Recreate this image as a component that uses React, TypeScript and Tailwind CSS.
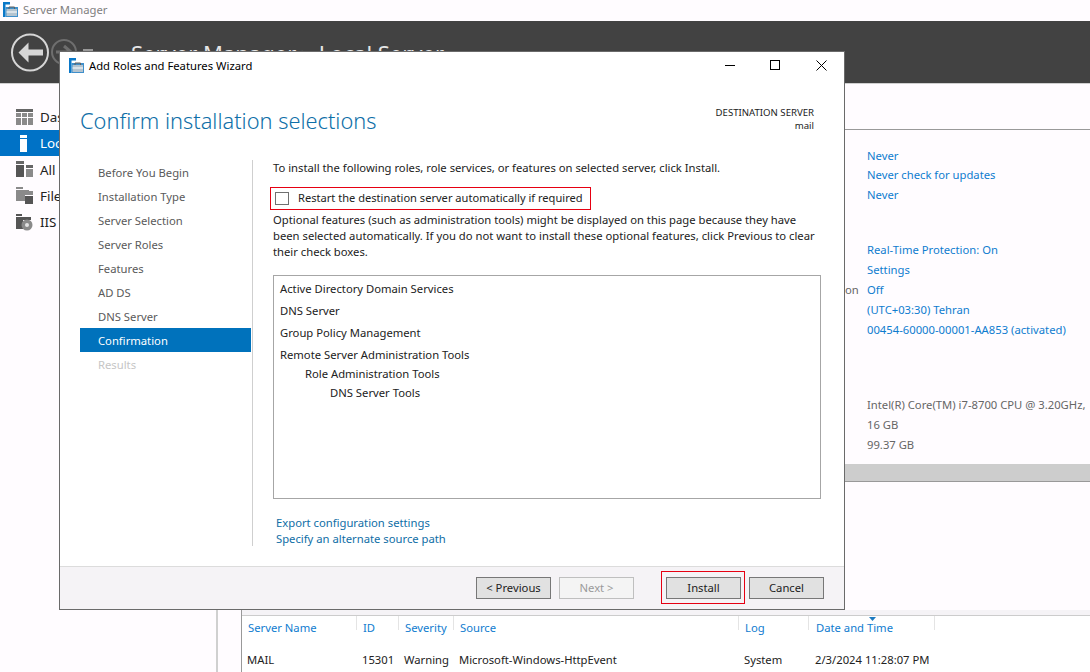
import type { ReactNode } from "react";

function Logo({ className }: { className: string }) {
  return (
    <svg viewBox="0 0 15 15" className={className}>
      <path d="M0 0H7V2.5H2.5V15H0Z" fill="#0a78c8" />
      <path d="M2.5 5H15V15H2.5Z" fill="#3f8fcb" />
      <path d="M3.5 7H14V14H3.5Z" fill="#b4c4d0" />
      <path d="M6 7V5H11.5V7" fill="none" stroke="#5f5f5f" strokeWidth="1" />
      <path d="M3.5 9.5H14V10.5H3.5Z" fill="#fff" />
    </svg>
  );
}

function T({ x, y, c = "", children }: { x: number; y: number; c?: string; children: ReactNode }) {
  return (
    <div className={`absolute whitespace-nowrap leading-4 ${c}`} style={{ left: x, top: y - 8 }}>
      {children}
    </div>
  );
}

function WizButton({ children, disabled, className = "" }: { children: ReactNode; disabled?: boolean; className?: string }) {
  return (
    <div
      className={`flex h-[22px] w-[75px] items-center justify-center border ${
        disabled ? "border-[#bfbfbf] bg-[#f4f4f4] text-[#9a9a9a]" : "border-[#777] bg-[#e1e1e1] text-[#222]"
      } ${className}`}
    >
      {children}
    </div>
  );
}

const link = "text-[#0f7ccf]";
const grey = "text-[#666]";

export default function App() {
  const nav = ["Before You Begin", "Installation Type", "Server Selection", "Server Roles", "Features", "AD DS", "DNS Server"];
  return (
    <div className="relative h-[672px] w-[1090px] overflow-hidden bg-[#fffcff] text-[11.25px] text-[#222] [font-family:'Open_Sans',sans-serif]">
      {/* title bar */}
      <Logo className="absolute left-[3px] top-[2px] h-[15px] w-[15px]" />
      <T x={23} y={10} c="text-[#7f7f7f]">Server Manager</T>

      {/* dark header */}
      <div className="absolute left-0 top-[21px] h-[63px] w-full border-b border-[#cfcfcf] bg-[#424242]" />
      <svg className="absolute left-[10px] top-[32px] h-[42px] w-[70px]" viewBox="0 0 70 42">
        <circle cx="20" cy="20.5" r="18" fill="none" stroke="#d6d6d6" strokeWidth="2" />
        <path d="M8.5 20.5L18.5 10.5V17.5H33V23.5H18.5V30.5Z" fill="#d6d6d6" />
        <circle cx="54" cy="20" r="12" fill="none" stroke="#6e6e6e" strokeWidth="2" />
        <path d="M46 20H60M54 14L61 20L54 26" fill="none" stroke="#6e6e6e" strokeWidth="3" />
      </svg>
      <div className="absolute left-[83px] top-[49px] h-[2px] w-[10px] bg-[#9a9a9a]" />
      <div className="absolute left-[131px] top-[39px] h-[12px] w-[330px] overflow-hidden whitespace-nowrap text-[22px] leading-7 text-[#e6e6e6]">
        Server Manager ▸ Local Server
      </div>

      {/* left nav */}
      <svg className="absolute left-[16px] top-[109px] h-[16px] w-[17px]" viewBox="0 0 17 16">
        <path d="M0 0H17V3H0Z" fill="#666" />
        <path d="M0 4H5V8H0ZM6 4H11V8H6ZM12 4H17V8H12ZM0 9H5V16H0ZM6 9H11V16H6ZM12 9H17V16H12Z" fill="#8a8a8a" />
      </svg>
      <T x={40} y={117} c="text-[13.4px]">Das</T>
      <div className="absolute left-0 top-[130px] h-[26px] w-[60px] bg-[#0072c6]" />
      <svg className="absolute left-[20px] top-[135px] h-[17px] w-[7px]" viewBox="0 0 7 17">
        <path d="M0 0H7V3H0ZM0 4H7V17H0Z" fill="#fff" />
      </svg>
      <T x={40} y={143} c="text-[13.4px] text-white">Loc</T>
      <svg className="absolute left-[16px] top-[161px] h-[16px] w-[17px]" viewBox="0 0 17 16">
        <path d="M0 0H8V3H0Z" fill="#666" />
        <path d="M0 4H8V16H0Z" fill="#555" />
        <path d="M10 4H17V7H10Z" fill="#666" />
        <path d="M10 8H17V16H10Z" fill="#8a8a8a" />
      </svg>
      <T x={40} y={170} c="text-[13.4px]">All</T>
      <svg className="absolute left-[16px] top-[187px] h-[17px] w-[17px]" viewBox="0 0 17 17">
        <path d="M0 0H7V2H0Z" fill="#8a8a8a" />
        <path d="M0 3H13V4H17V8H9V14H0Z" fill="#8a8a8a" />
        <path d="M9 9H17V17H9Z" fill="#555" />
      </svg>
      <T x={40} y={196} c="text-[13.4px]">File</T>
      <svg className="absolute left-[16px] top-[214px] h-[17px] w-[17px]" viewBox="0 0 17 17">
        <path d="M0 0H6V2H0Z" fill="#555" />
        <path d="M0 3H15V6H7V15H0Z" fill="#555" />
        <circle cx="11" cy="11" r="5.5" fill="#8a8a8a" />
        <circle cx="11" cy="11" r="2" fill="#e2e2e2" />
      </svg>
      <T x={40} y={222} c="text-[13.4px]">IIS</T>

      {/* right panel behind window */}
      <div className="absolute left-[844px] top-[129px] h-px w-[246px] bg-[#999]" />
      <T x={867} y={156} c={link}>Never</T>
      <T x={867} y={175} c={link}>Never check for updates</T>
      <T x={867} y={195} c={link}>Never</T>
      <T x={867} y={250} c={link}>Real-Time Protection: On</T>
      <T x={867} y={270} c={link}>Settings</T>
      <T x={845} y={290} c={grey}>on</T>
      <T x={867} y={290} c={link}>Off</T>
      <T x={867} y={310} c={link}>(UTC+03:30) Tehran</T>
      <T x={867} y={330} c={link}>00454-60000-00001-AA853 (activated)</T>
      <T x={867} y={405} c={grey}>Intel(R) Core(TM) i7-8700 CPU @ 3.20GHz,</T>
      <T x={867} y={425} c={grey}>16 GB</T>
      <T x={867} y={445} c={grey}>99.37 GB</T>
      <div className="absolute left-[844px] top-[464px] h-[18px] w-[246px] border-b border-[#999] bg-[#cdcdcd]" />

      {/* events table behind window */}
      <div className="absolute left-[216px] top-[610px] h-[62px] w-[2px] bg-[#d0d0d0]" />
      <div className="absolute left-[241px] top-[610px] h-[62px] w-px bg-[#999]" />
      <div className="absolute left-[242px] top-[610px] right-0 h-[6px] border-b border-[#ccc] bg-[#f5f3f6]" />
      <div className="absolute left-[242px] top-[616px] right-0 h-[56px] bg-white" />
      <div className="absolute left-[356px] top-[616px] h-[14px] w-px bg-[#e4e4e4]" />
      <div className="absolute left-[398px] top-[616px] h-[14px] w-px bg-[#e4e4e4]" />
      <div className="absolute left-[453px] top-[616px] h-[14px] w-px bg-[#e4e4e4]" />
      <div className="absolute left-[738px] top-[616px] h-[14px] w-px bg-[#e4e4e4]" />
      <div className="absolute left-[808px] top-[616px] h-[14px] w-px bg-[#e4e4e4]" />
      <div className="absolute left-[934px] top-[616px] h-[14px] w-px bg-[#e4e4e4]" />
      <svg className="absolute left-[869px] top-[617px] h-[4px] w-[7px]" viewBox="0 0 7 4">
        <path d="M0 0H7L3.5 4Z" fill="#1c7ac0" />
      </svg>
      <T x={248} y={628} c={link}>Server Name</T>
      <T x={363} y={628} c={link}>ID</T>
      <T x={405} y={628} c={link}>Severity</T>
      <T x={460} y={628} c={link}>Source</T>
      <T x={745} y={628} c={link}>Log</T>
      <T x={816} y={628} c={link}>Date and Time</T>
      <T x={247} y={660}>MAIL</T>
      <T x={362} y={660}>15301</T>
      <T x={404} y={660}>Warning</T>
      <T x={459} y={660}>Microsoft-Windows-HttpEvent</T>
      <T x={744} y={660}>System</T>
      <T x={815} y={660}>2/3/2024 11:28:07 PM</T>

      {/* wizard window */}
      <div className="absolute left-[59px] top-[51px] h-[559px] w-[786px] border border-[#6a6a6a] bg-white">
        <Logo className="absolute left-[9px] top-[6px] h-[15px] w-[15px]" />
        <T x={29} y={14} c="text-black">Add Roles and Features Wizard</T>
        <div className="absolute left-[665px] top-[13px] h-px w-[10px] bg-black" />
        <div className="absolute left-[710px] top-[8px] h-[10px] w-[10px] border border-black" />
        <svg className="absolute left-[756px] top-[8px] h-[11px] w-[11px]" viewBox="0 0 11 11">
          <path d="M0.5 0.5L10.5 10.5M10.5 0.5L0.5 10.5" stroke="#000" strokeWidth="1" />
        </svg>
        <div className="absolute left-[20px] top-[53px] whitespace-nowrap text-[21.8px] font-light leading-8 text-[#0f6fa8]">
          Confirm installation selections
        </div>
        <div className="absolute right-[30px] top-[54px] text-right text-[9.6px] leading-[13px]">
          DESTINATION SERVER
          <br />
          mail
        </div>

        {/* steps */}
        <div className="absolute left-[20px] top-[108px] flex w-[171px] flex-col text-[#5a5a5a]">
          {nav.map((n) => (
            <div key={n} className="flex h-6 items-center pl-[18px] pt-[2px]">{n}</div>
          ))}
          <div className="flex h-6 items-center bg-[#0072bc] pl-[18px] pt-[2px] text-white">Confirmation</div>
          <div className="flex h-6 items-center pl-[18px] pt-[2px] text-[#c6c6c6]">Results</div>
        </div>
        <div className="absolute left-[192px] top-[108px] h-[386px] w-px bg-[#cfcfcf]" />

        {/* content */}
        <T x={213} y={116}>To install the following roles, role services, or features on selected server, click Install.</T>
        <div className="absolute left-[210px] top-[135px] flex h-[23px] w-[321px] items-center border border-[#e60012] pl-[4px]">
          <div className="h-[13px] w-[14px] border border-[#707070] bg-white" />
          <div className="ml-[9px] whitespace-nowrap text-[11.1px]">Restart the destination server automatically if required</div>
        </div>
        <div className="absolute left-[213px] top-[160px] whitespace-nowrap leading-4">
          Optional features (such as administration tools) might be displayed on this page because they have
          <br />
          been selected automatically. If you do not want to install these optional features, click Previous to clear
          <br />
          their check boxes.
        </div>
        <div className="absolute left-[213px] top-[223px] h-[224px] w-[548px] border border-[#a6a6a6]">
          <T x={6} y={13}>Active Directory Domain Services</T>
          <T x={6} y={35}>DNS Server</T>
          <T x={6} y={57}>Group Policy Management</T>
          <T x={6} y={79}>Remote Server Administration Tools</T>
          <T x={31} y={98}>Role Administration Tools</T>
          <T x={56} y={117}>DNS Server Tools</T>
        </div>
        <T x={216} y={471} c="text-[#0f6ea6]">Export configuration settings</T>
        <T x={216} y={487} c="text-[#0f6ea6]">Specify an alternate source path</T>

        {/* footer */}
        <div className="absolute bottom-0 left-0 flex h-[43px] w-full items-start border-t border-[#dcdcdc] bg-[#f5f3f6] pl-[416px] pt-[10px]">
          <WizButton>&lt; Previous</WizButton>
          <WizButton disabled className="ml-2">Next &gt;</WizButton>
          <WizButton className="ml-8">Install</WizButton>
          <WizButton className="ml-2">Cancel</WizButton>
        </div>
        <div className="absolute left-[601px] top-[519px] h-[33px] w-[84px] border border-[#e60012]" />
      </div>
    </div>
  );
}
